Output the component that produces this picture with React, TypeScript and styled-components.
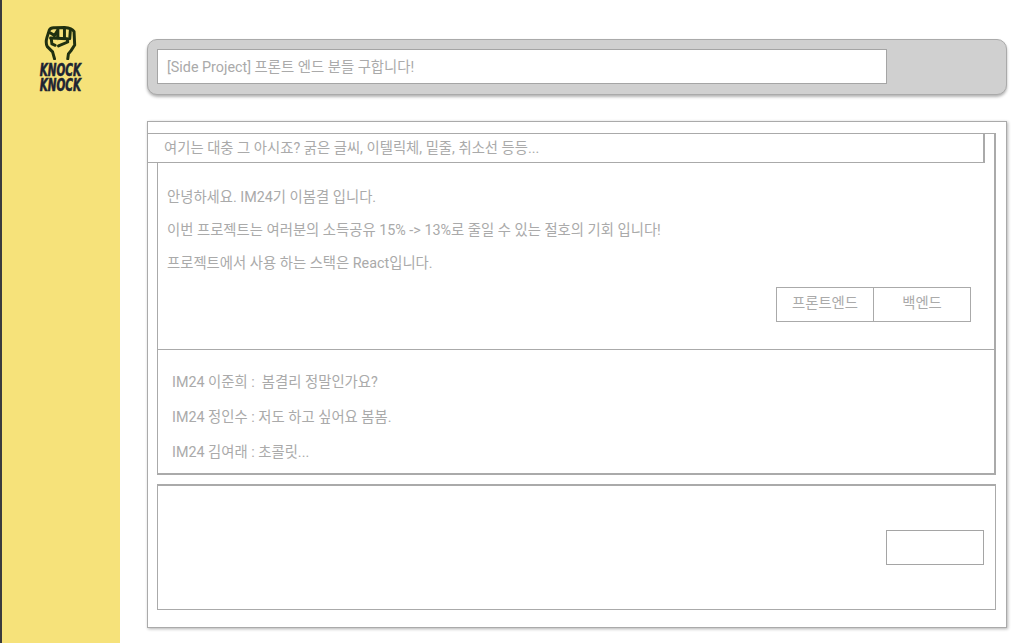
import React from "react"
import styled, { createGlobalStyle } from "styled-components"

const GlobalStyle = createGlobalStyle`
    html, body {
        margin: 0;
        height: 100%;
        background: #fff;
        overflow: hidden;
    }
    * {
        box-sizing: border-box;
    }
`;

const Page = styled.div`
    display: flex;
    height: 643px;
    font-family: Roboto, "Noto Sans CJK KR", sans-serif;
    font-size: 14.35px;
    color: #aaa;
`;

const Sidebar = styled.aside`
    width: 120px;
    flex-shrink: 0;
    background: #f6e27a;
    border-left: 2px solid #3a3a3d;
    display: flex;
    flex-direction: column;
    align-items: center;
    padding-top: 25px;
`;

const Fist = styled.svg`
    width: 33px;
    height: 35px;
    display: block;
    margin-left: -2px;
`;

const LogoText = styled.div`
    margin-top: 3px;
    font-family: "DejaVu Sans Condensed", "DejaVu Sans", sans-serif;
    font-weight: 700;
    font-style: italic;
    font-size: 17px;
    line-height: 15px;
    color: #1d2433;
    text-align: center;
    transform: scaleX(0.68);
    -webkit-text-stroke: 0.6px #1d2433;
    margin-left: -1px;
`;

const Main = styled.main`
    flex: 1;
    padding: 39px 28px 0 27px;
    display: flex;
    flex-direction: column;
    gap: 26px;
`;

const TitleBar = styled.header`
    height: 56px;
    background: #d0d0d0;
    border: 1px solid #aaa;
    border-radius: 10px;
    box-shadow: 0 2px 3px rgba(0, 0, 0, 0.3);
    padding: 9px;
`;

const TitleInput = styled.div`
    width: 730px;
    height: 35px;
    background: #fff;
    border: 1px solid #a5a5a5;
    padding: 3px 0 0 9px;
    line-height: 30px;
`;

const Card = styled.section`
    height: 507px;
    border: 1px solid #aaa;
    box-shadow: 1px 1px 3px rgba(0, 0, 0, 0.3);
    padding: 11px 10px 0 9px;
`;

const Post = styled.article`
    height: 342px;
    border: 1px solid #aaa;
    border-bottom-width: 2px;
    border-right-width: 2px;
    display: flex;
    flex-direction: column;
`;

const FormatBar = styled.div`
    height: 30px;
    margin: -1px 9px 0 -10px;
    flex-shrink: 0;
    background: #fff;
    border: 1px solid #aaa;
    border-right-width: 2px;
    border-left: 0;
    padding: 1px 0 0 16px;
    line-height: 28px;
`;

const PostBody = styled.div`
    height: 187px;
    flex-shrink: 0;
    padding: 18px 23px 0 9px;
    border-bottom: 1px solid #aaa;
    display: flex;
    flex-direction: column;
`;

const Line = styled.p`
    margin: 0;
    height: 33px;
    line-height: 33px;
`;

const Tabs = styled.div`
    display: flex;
    justify-content: flex-end;
    margin-top: 7px;
`;

const Tab = styled.div`
    width: 98px;
    height: 35px;
    border: 1px solid #aaa;
    text-align: center;
    line-height: 31px;
    & + & {
        margin-left: -1px;
    }
`;

const Comments = styled.div`
    padding: 15px 0 0 14px;
`;

const Comment = styled.p`
    margin: 0;
    height: 35px;
    line-height: 35px;
    white-space: pre;
`;

const Composer = styled.div`
    height: 126px;
    margin-top: 9px;
    border: 1px solid #aaa;
    border-top-width: 2px;
    display: flex;
    justify-content: flex-end;
    align-items: center;
    padding: 0 11px 0 0;
`;

const SubmitButton = styled.div`
    width: 98px;
    height: 35px;
    border: 1px solid #a5a5a5;
    background: #fff;
`;

export default function App() {
    return <Page>
        <GlobalStyle />
        <Sidebar>
            <Fist viewBox="40 25 100 105" fill="none" stroke="#1f3010" strokeWidth="9" strokeLinejoin="round" strokeLinecap="round">
                <path d="M72 127 L66 106 L50 90 Q44 78 49 62 L56 40 Q60 32 72 33 L102 32 Q125 34 131 44 L133 85 L122 102 L114 112 L112 127" />
                <path d="M58 48 L72 56 L82 40 M82 36 L82 66 M102 34 L102 66 M120 38 L118 66 M60 64 L110 66 L112 76 L84 88" />
                <path d="M62 66 L64 82 L74 86" />
            </Fist>
            <LogoText>KNOCK<br />KNOCK</LogoText>
        </Sidebar>
        <Main>
            <TitleBar>
                <TitleInput>[Side Project] 프론트 엔드 분들 구합니다!</TitleInput>
            </TitleBar>
            <Card>
                <Post>
                    <FormatBar>여기는 대충 그 아시죠? 굵은 글씨, 이텔릭체, 밑줄, 취소선 등등...</FormatBar>
                    <PostBody>
                        <Line>안녕하세요. IM24기 이봄결 입니다.</Line>
                        <Line>이번 프로젝트는 여러분의 소득공유 15% -&gt; 13%로 줄일 수 있는 절호의 기회 입니다!</Line>
                        <Line>프로젝트에서 사용 하는 스택은 React입니다.</Line>
                        <Tabs>
                            <Tab>프론트엔드</Tab>
                            <Tab>백엔드</Tab>
                        </Tabs>
                    </PostBody>
                    <Comments>
                        <Comment>IM24 이준희 :  봄결리 정말인가요?</Comment>
                        <Comment>IM24 정인수 : 저도 하고 싶어요 봄봄.</Comment>
                        <Comment>IM24 김여래 : 초콜릿...</Comment>
                    </Comments>
                </Post>
                <Composer>
                    <SubmitButton />
                </Composer>
            </Card>
        </Main>
    </Page>
}
